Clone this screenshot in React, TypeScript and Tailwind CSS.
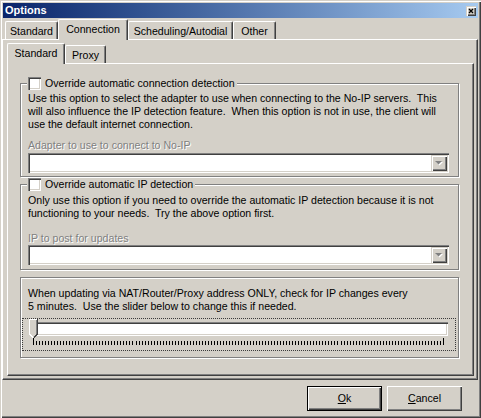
const sunken =
  "shadow-[inset_1px_1px_0_#808080,inset_2px_2px_0_#404040,inset_-1px_-1px_0_#fff,inset_-2px_-2px_0_#d4d0c8]";
const raised =
  "shadow-[inset_1px_1px_0_#d4d0c8,inset_2px_2px_0_#fff,inset_-1px_-1px_0_#404040,inset_-2px_-2px_0_#808080]";

function Tab({ label, width, selected, small }: { label: string; width: string; selected?: boolean; small?: boolean }) {
  const size = selected
    ? "h-[21px] -mb-[1px] relative z-10 " + (small ? "pb-[2px]" : "pb-[1px]")
    : "h-[18px] pt-[1px]";
  return (
    <div
      className={`${width} ${size} bg-[#d4d0c8] border-l border-t border-white border-r border-r-[#404040] rounded-t-[2px] shadow-[inset_-1px_0_0_#808080] flex items-center justify-center whitespace-nowrap`}
    >
      {label}
    </div>
  );
}

function Checkbox() {
  return <div className={`w-[13px] h-[13px] bg-white ${sunken}`} />;
}

function Combo({ className }: { className: string }) {
  return (
    <div className={`${className} ml-[7px] w-[421px] h-[20px] bg-white p-[2px] flex justify-end ${sunken}`}>
      <div className={`w-[16px] h-full bg-[#d4d0c8] flex items-center justify-center ${raised}`}>
        <svg width="8" height="5" className="block">
          <polygon points="1,1 8,1 4.5,4.5" fill="#fff" />
          <polygon points="0,0 7,0 3.5,3.5" fill="#808080" />
        </svg>
      </div>
    </div>
  );
}

function Disabled({ text, className }: { text: string; className: string }) {
  return (
    <div className={`${className} pl-[7px] h-[13px] text-[#808080] [text-shadow:1px_1px_0_#fff]`}>{text}</div>
  );
}

function Slider() {
  const ticks = Array.from({ length: 137 }, (_, i) => Math.round((i * 410) / 136));
  return (
    <div className="relative ml-[1px] mt-[5px] w-[434px] h-[33px] border border-dotted border-[#3a3a3a]">
      <div className={`ml-[8px] mt-[3px] w-[417px] h-[14px] bg-white ${sunken}`} />
      <svg className="block ml-[10px] mt-[2px]" width="411" height="7" shapeRendering="crispEdges">
        {ticks.map((x, i) => (
          <rect
            key={i}
            x={x}
            y={i === 0 || i === ticks.length - 1 ? 0 : 3}
            width="1"
            height={i === 0 || i === ticks.length - 1 ? 7 : 4}
            fill="#000"
          />
        ))}
      </svg>
      {/* thumb */}
      <svg className="absolute left-[6px] top-0" width="9" height="20" shapeRendering="crispEdges">
        <polygon points="0,0 9,0 9,15 4.5,19.5 0,15" fill="#d4d0c8" />
        <rect x="0" y="0" width="8" height="1" fill="#fff" />
        <rect x="0" y="0" width="1" height="15" fill="#fff" />
        <rect x="7" y="1" width="1" height="14" fill="#808080" />
        <rect x="8" y="0" width="1" height="15" fill="#404040" />
        <line x1="0.5" y1="15" x2="4" y2="18.5" stroke="#fff" />
        <line x1="8.5" y1="15" x2="5" y2="18.5" stroke="#404040" />
      </svg>
    </div>
  );
}

const groupBox = "w-[439px] border border-[#808080] shadow-[inset_1px_1px_0_#fff,1px_1px_0_#fff] flex flex-col";

function Button({ first, rest, isDefault }: { first: string; rest: string; isDefault?: boolean }) {
  return (
    <div
      className={`w-[75px] h-[25px] bg-[#d4d0c8] flex items-center justify-center ${
        isDefault
          ? "border border-black shadow-[inset_1px_1px_0_#fff,inset_-1px_-1px_0_#404040,inset_-2px_-2px_0_#808080]"
          : "shadow-[inset_1px_1px_0_#fff,inset_-1px_-1px_0_#404040,inset_-2px_-2px_0_#808080]"
      }`}
    >
      <span>
        <span className="underline">{first}</span>
        {rest}
      </span>
    </div>
  );
}

export default function App() {
  return (
    <div className="w-[481px] h-[418px] bg-[#d4d0c8] font-['Liberation_Sans',Arial,sans-serif] text-[10.6px] leading-[13px] text-black flex flex-col pt-[3px] select-none shadow-[inset_1px_1px_0_#d4d0c8,inset_2px_2px_0_#fff,inset_-1px_-1px_0_#404040,inset_-2px_-2px_0_#808080]">
      {/* title bar */}
      <div className="mx-[3px] h-[15px] bg-linear-to-r from-[#0a246a] to-[#a6caf0] flex items-center justify-between px-[2px]">
        <span className="text-white font-bold text-[11px] leading-[13px]">Options</span>
        <div className={`w-[10px] h-[10px] bg-[#d4d0c8] flex items-center justify-center ${raised}`}>
          <svg width="10" height="10" className="block">
            <path d="M3 3L7 7M7 3L3 7" stroke="#000" strokeWidth="1.3" />
          </svg>
        </div>
      </div>

      {/* outer tabs */}
      <div className="mt-[1px] h-[20px] pl-[5px] flex items-end">
        <Tab label="Standard" width="w-[53px]" />
        <Tab label="Connection" width="w-[70px]" selected />
        <Tab label="Scheduling/Autodial" width="w-[105px]" />
        <Tab label="Other" width="w-[43px]" />
      </div>

      <div className="ml-[2px] w-[476px] h-[341px] border-l border-t border-white border-r border-b border-r-[#404040] border-b-[#404040] shadow-[inset_-1px_-1px_0_#808080] pt-[3px] pl-[4px] flex flex-col">
        {/* inner tabs */}
        <div className="h-[20px] flex items-end">
          <Tab label="Standard" width="w-[58px]" selected small />
          <Tab label="Proxy" width="w-[41px]" />
        </div>

        <div className="w-[467px] h-[313px] border-l border-t border-white border-r border-b border-r-[#404040] border-b-[#404040] shadow-[inset_-1px_-1px_0_#808080] pt-[19px] pl-[12px] flex flex-col gap-[7px]">
          {/* group 1 */}
          <div className={`${groupBox} pb-[3px]`}>
            <div className="-mt-[7px] ml-[6px] self-start bg-[#d4d0c8] pl-[1px] pr-[2px] h-[13px] flex items-center gap-[4px]">
              <Checkbox />
              <span>Override automatic connection detection</span>
            </div>
            <div className="mt-[2px] pl-[7px] whitespace-pre">
              <div>Use this option to select the adapter to use when connecting to the No-IP servers.  This</div>
              <div>will also influence the IP detection feature.  When this option is not in use, the client will</div>
              <div>use the default internet connection.</div>
            </div>
            <Disabled text="Adapter to use to connect to No-IP" className="mt-[8px]" />
            <Combo className="mt-[1px]" />
          </div>

          {/* group 2 */}
          <div className={`${groupBox} pb-[4px]`}>
            <div className="-mt-[7px] ml-[6px] self-start bg-[#d4d0c8] pl-[1px] pr-[2px] h-[13px] flex items-center gap-[4px]">
              <Checkbox />
              <span>Override automatic IP detection</span>
            </div>
            <div className="mt-[3px] pl-[7px] whitespace-pre">
              <div>Only use this option if you need to override the automatic IP detection because it is not</div>
              <div>functioning to your needs.  Try the above option first.</div>
            </div>
            <Disabled text="IP to post for updates" className="mt-[12px]" />
            <Combo className="mt-0" />
          </div>

          {/* group 3 */}
          <div className={`${groupBox} pt-[9px] pb-[6px]`}>
            <div className="pl-[7px] whitespace-pre">
              <div>When updating via NAT/Router/Proxy address ONLY, check for IP changes every</div>
              <div>5 minutes.  Use the slider below to change this if needed.</div>
            </div>
            <Slider />
          </div>
        </div>
      </div>

      {/* buttons */}
      <div className="mt-[6px] flex justify-end gap-[5px] pr-[19px]">
        <Button first="O" rest="k" isDefault />
        <Button first="C" rest="ancel" />
      </div>
    </div>
  );
}
